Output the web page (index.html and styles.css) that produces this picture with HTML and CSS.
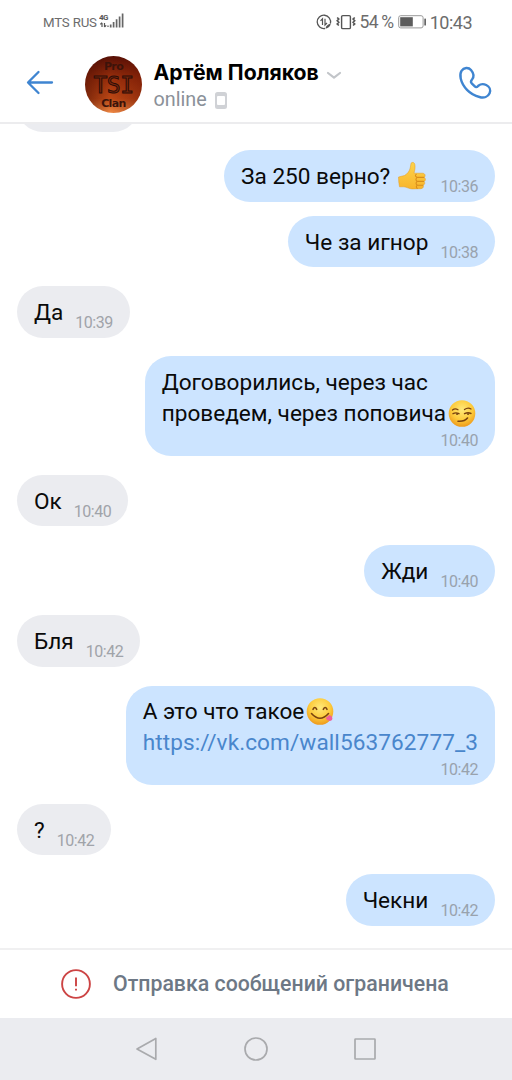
FILE: index.html
```
<!DOCTYPE html>
<html lang="ru">

<head>
    <title>Артём Поляков</title>
    <meta charset="UTF-8">
    <link rel="stylesheet" href="styles.css">
</head>

<body>
    <!-- shared emoji gradients -->
    <svg class="defs" width="0" height="0">
        <defs>
            <radialGradient id="face" cx="50%" cy="35%" r="65%">
                <stop offset="0" stop-color="#ffe97a" />
                <stop offset="0.6" stop-color="#fdcb3c" />
                <stop offset="1" stop-color="#ee9a1c" />
            </radialGradient>
            <linearGradient id="hand" x1="0" y1="0" x2="0" y2="1">
                <stop offset="0" stop-color="#fdd34b" />
                <stop offset="1" stop-color="#f8b52c" />
            </linearGradient>
        </defs>
    </svg>

    <div class="status">
        <span class="carrier">MTS RUS</span>
        <svg class="signal" width="26" height="18" viewBox="0 0 26 18">
            <text x="0" y="8" class="net">4G</text>
            <path d="M3 11v4M1.3 12.3L3 10.6M5.5 11v4M5.5 15l1.7-1.6M9 13.5V15" fill="none" stroke="#555" stroke-width="1.2" />
            <path d="M11.700 15.500v-3M14.600 15.500v-5.500M17.600 15.500V7.200M20.600 15.500V4.500M23.600 15.500V1.500" stroke="#666" stroke-width="1.700" />
        </svg>
        <span class="spacer"></span>
        <svg class="data" width="16" height="16" viewBox="0 0 16 16" fill="none" stroke="#555">
            <path d="M14.4 9.5A6.700 6.700 0 1 0 9 14.500" stroke-width="1.3" />
            <path d="M9.500 14.800Q10 10.800 14.800 9.600Q14 13.800 9.500 14.800z" fill="#555" stroke="none" />
            <path d="M6.500 11V4.800L4.500 6.800M9 4.800V11L11 9" stroke-width="1.2" />
        </svg>
        <svg class="vibro" width="20" height="16" viewBox="0 0 20 16" fill="none" stroke="#555">
            <rect x="5.600" y="1.600" width="8.800" height="13" rx="1.200" stroke-width="1.400" />
            <path d="M1.200 3.500l1.600 1.600-1.600 1.600 1.600 1.600-1.600 1.600 1.600 1.600M18.700 3.500l-1.600 1.600 1.600 1.600-1.600 1.600 1.600 1.600-1.600 1.600" stroke-width="1.600" />
        </svg>
        <span class="percent">54 %</span>
        <svg class="battery" width="29" height="14" viewBox="0 0 29 14">
            <rect x="0.7" y="0.7" width="24.4" height="12.2" rx="2" fill="none" stroke="#999" stroke-width="1" />
            <rect x="2.2" y="2.2" width="12.6" height="9.2" fill="#5c5c5c" />
            <rect x="26.3" y="3.5" width="1.7" height="7" rx="0.6" fill="#666" />
        </svg>
        <span class="clock">10:43</span>
    </div>

    <div class="header">
        <svg class="back" width="28" height="26" viewBox="0 0 28 26" fill="none" stroke="#3f85d1" stroke-width="2.3" stroke-linecap="round" stroke-linejoin="round">
            <path d="M26 12.500H2.500M12.500 2L2 12.500l10.500 10.500" />
        </svg>
        <div class="avatar">
            <span class="small">Pro</span>
            <span class="big">TSI</span>
            <span class="small">Clan</span>
        </div>
        <div class="who">
            <div class="name">
                Артём Поляков
                <svg width="16" height="9" viewBox="0 0 16 9" fill="none" stroke="#c2c5c9" stroke-width="2.2" stroke-linecap="round" stroke-linejoin="round">
                    <path d="M2 2l6 4.6L14 2" />
                </svg>
            </div>
            <div class="online">
                online
                <svg width="12" height="17" viewBox="0 0 12 17">
                    <path fill="#d0d2d6" fill-rule="evenodd" d="M2.5 0h7A2.500 2.500 0 0 1 12 2.500v12A2.500 2.500 0 0 1 9.500 17h-7A2.500 2.500 0 0 1 0 14.500v-12A2.500 2.500 0 0 1 2.500 0zM3 4q-1 0-1 1v7q0 1 1 1h6q1 0 1-1V5q0-1-1-1z" />
                </svg>
            </div>
        </div>
        <svg class="call" width="34" height="34" viewBox="0 0 34 34" fill="none" stroke="#3f85d1" stroke-width="2.4" stroke-linejoin="round">
            <path d="M3.500 4.800C5.800 1.300 10.500 1 13 4C15.500 7 16.500 10.500 14 13.500C12.500 15.200 12.500 16 13.700 17.300L16.800 20.300C18 21.500 18.700 21.300 20.300 19.800C23 17.600 25.500 17.700 28.200 19C31.500 20.700 33 24 31.600 27.200C30 30.700 26 32.300 21.500 31C11.500 28.500 4.500 20.500 2.700 12.500C2.100 9.700 2 7.200 3.500 4.800z" />
        </svg>
    </div>

    <div class="chat">
        <div class="msg in first"></div>
        <div class="msg out turn">
            <span class="text">За 250 верно?
                <svg class="emoji thumb" width="28" height="29" viewBox="0 0 28 29">
                    <path fill="url(#hand)" stroke="#e59b20" stroke-width="0.5" d="M0.500 15.500L6.500 14C9.500 12.500 11.500 9.500 12.200 6.500L13 2C13.600 0.200 16.400 0.500 16.900 3.300C17.400 6 16.700 9 16 11.700L24.500 11.700C27.500 11.900 27.800 15 26 15.900C28 16.700 27.800 19.400 25.900 20C27.300 21 26.900 23.300 25 23.700C26 24.800 25.300 27 23 27.200L14 27.400C10.500 27.300 9 25.500 6 25.300L1.500 25.300Q0.500 20.500 0.500 15.500z" />
                    <path fill="none" stroke="#d98e1a" stroke-width="1.100" stroke-linecap="round" d="M19.500 15.900h6.300M19 19.900h6.700M19 23.700h5.800M18.200 12.800q-2 1.700 1 3.100q-2.500 2 0 4q-2.200 1.800 0 3.800q-1.700 1.600 0 3.100" />
                </svg></span>
            <span class="time">10:36</span>
        </div>
        <div class="msg out"><span class="text">Че за игнор</span><span class="time">10:38</span></div>
        <div class="msg in turn"><span class="text">Да</span><span class="time">10:39</span></div>
        <div class="msg out turn multi">
            <span class="text">Договорились, через час<br>проведем, через поповича<svg class="emoji" width="28" height="28" viewBox="0 0 28 28">
                    <circle cx="14" cy="14" r="13.300" fill="url(#face)" />
                    <g fill="none" stroke="#7b4310" stroke-linecap="round">
                        <path d="M4.500 10.500Q7 8.300 10 10.200M16.500 10Q20 7.500 23 9.500" stroke-width="1.300" />
                        <path d="M5 14.200Q8 12.500 11 14.200M16.500 14.200Q20 12.500 23 14" stroke-width="1.400" />
                        <path d="M10 21.700Q16.500 22.300 19.500 18.500" stroke-width="1.600" />
                    </g>
                    <path d="M8 14h2.600q-.8 2-2.200 1.300zM19 14h2.600q-.8 2-2.200 1.300z" fill="#60330c" />
                </svg></span>
            <span class="time">10:40</span>
        </div>
        <div class="msg in turn"><span class="text">Ок</span><span class="time">10:40</span></div>
        <div class="msg out turn"><span class="text">Жди</span><span class="time">10:40</span></div>
        <div class="msg in turn"><span class="text">Бля</span><span class="time">10:42</span></div>
        <div class="msg out turn multi">
            <span class="text">А это что такое<svg class="emoji" width="28" height="28" viewBox="0 0 28 28">
                    <circle cx="14" cy="14" r="13.300" fill="url(#face)" />
                    <path d="M7 11.800Q8.800 8.300 10.700 11.800M17.300 11.800Q19.200 8.300 21 11.800" fill="none" stroke="#7b4310" stroke-width="1.600" stroke-linecap="round" />
                    <path d="M5.500 16Q14 25.500 22.500 16" fill="none" stroke="#7b4310" stroke-width="1.600" stroke-linecap="round" />
                    <path d="M19.500 20.500L23.500 17.500Q27.500 19.500 26 22.500Q22.500 25 19.500 20.500z" fill="#f0609b" />
                </svg><br><a href="#">https://vk.com/wall563762777_3</a></span>
            <span class="time">10:42</span>
        </div>
        <div class="msg in turn"><span class="text">?</span><span class="time">10:42</span></div>
        <div class="msg out turn"><span class="text">Чекни</span><span class="time">10:42</span></div>
    </div>

    <div class="notice">
        <svg width="30" height="30" viewBox="0 0 30 30" fill="none" stroke="#cc4444">
            <circle cx="15" cy="15" r="13.900" stroke-width="1.900" />
            <path d="M15 8.500v8.700M15 19.700v1.900" stroke-width="1.900" />
        </svg>
        <span>Отправка сообщений ограничена</span>
    </div>

    <div class="nav">
        <svg width="24" height="26" viewBox="0 0 24 26"><path d="M20.800 2.500v20.800L2 13z" /></svg>
        <svg width="26" height="26" viewBox="0 0 26 26"><circle cx="13" cy="13" r="11" /></svg>
        <svg width="24" height="26" viewBox="0 0 24 26"><rect x="2" y="3" width="20" height="20" rx="0.500" /></svg>
    </div>
</body>

</html>
```
FILE: styles.css
```
* {
    box-sizing: border-box;
}
body {
    margin: 0;
    width: 512px;
    height: 1080px;
    display: flex;
    flex-direction: column;
    overflow: hidden;
    background: #fff;
    font-family: Roboto, "Noto Sans", sans-serif;
}
svg {
    flex: none;
}
.defs {
    display: block;
    height: 0;
}

.status {
    height: 44px;
    display: flex;
    align-items: center;
    padding: 0 40px 0 43px;
    color: #6c6c6c;
    font-size: 18px;
}
.carrier {
    font-size: 13.300px;
    letter-spacing: -0.2px;
}
.signal {
    margin: -2px 0 0 2px;
}
.net {
    font-size: 8px;
    font-weight: bold;
    letter-spacing: -0.5px;
    fill: #555;
}
.spacer {
    flex: 1;
}
.vibro {
    margin: 0 3px 0 4px;
}
.percent {
    font-size: 17.500px;
    letter-spacing: -0.4px;
    word-spacing: -1px;
}
.battery {
    margin: 0 3px 0 4px;
}
.clock {
    letter-spacing: -0.5px;
}

.header {
    height: 80px;
    display: flex;
    align-items: center;
    padding: 0 20px 0 26px;
    border-bottom: 2px solid #ececee;
}
.avatar {
    width: 57px;
    height: 57px;
    margin: 3px 11.500px 0 31px;
    border-radius: 50%;
    display: flex;
    flex-direction: column;
    align-items: center;
    justify-content: center;
    color: #3c130a;
    background: linear-gradient(90deg, rgba(60, 5, 0, 0.5), transparent 45%, rgba(90, 10, 0, 0.4)), linear-gradient(#571006, #9c300c 40%, #bc4815 75%, #f08a45);
}
.small {
    font: bold 11px/13px "DejaVu Sans", sans-serif;
    letter-spacing: -0.6px;
}
.big {
    font: 23px/24px "DejaVu Sans Mono", monospace;
    letter-spacing: -0.5px;
    color: #7c280c;
    -webkit-text-stroke: 1px #2c0d08;
}
.who {
    flex: 1;
    padding-top: 7px;
}
.name {
    font: bold 21.200px/27px Inter, sans-serif;
    color: #000;
    white-space: nowrap;
}
.name svg {
    margin-left: 2px;
}
.online {
    display: flex;
    align-items: center;
    gap: 8px;
    font-size: 19.800px;
    line-height: 28px;
    color: #8b9199;
}

.chat {
    height: 824px;
    display: flex;
    flex-direction: column;
    justify-content: flex-end;
    overflow: hidden;
    padding: 0 17px 22.300px;
}
.msg {
    flex: none;
    display: flex;
    align-items: flex-end;
    gap: 12px;
    margin-top: 13.800px;
    padding: 10.800px 17px 9.800px;
    border-radius: 26px;
    font-size: 22.600px;
    line-height: 31px;
    color: #0a0a0a;
    white-space: nowrap;
}
.turn {
    margin-top: 18.700px;
}
.in {
    align-self: flex-start;
    background: #ebecf0;
}
.out {
    align-self: flex-end;
    background: #cce4ff;
}
/* scrolled under the header */
.first {
    width: 122px;
    height: 51.600px;
}
.multi {
    flex-direction: column;
    gap: 0;
}
.text a {
    color: #4986cc;
    text-decoration: none;
    letter-spacing: 0.08px;
}
.time {
    font-size: 16px;
    line-height: 17px;
    letter-spacing: -0.450px;
    margin-bottom: -3px;
    color: #99a2ad;
}
.in .time {
    color: #a0a3a9;
}
.multi .time {
    margin: 3px 0 -3px;
}
.emoji {
    vertical-align: -6px;
    margin: -6px 2.500px -3px 1.500px;
    transform: translateY(-2.500px);
}
.thumb {
    margin-left: 2px;
}

.notice {
    height: 70px;
    display: flex;
    align-items: center;
    gap: 22px;
    padding: 0 0 1px 61px;
    border-top: 2px solid #f0f0f1;
    font-size: 21.300px;
    font-weight: 500;
    color: #6d7885;
}
.nav {
    flex: 1;
    display: flex;
    justify-content: center;
    align-items: center;
    gap: 84px;
    background: #ebecf0;
}
.nav svg {
    fill: none;
    stroke: #a9aaad;
    stroke-width: 1.700px;
    stroke-linejoin: round;
}
```
